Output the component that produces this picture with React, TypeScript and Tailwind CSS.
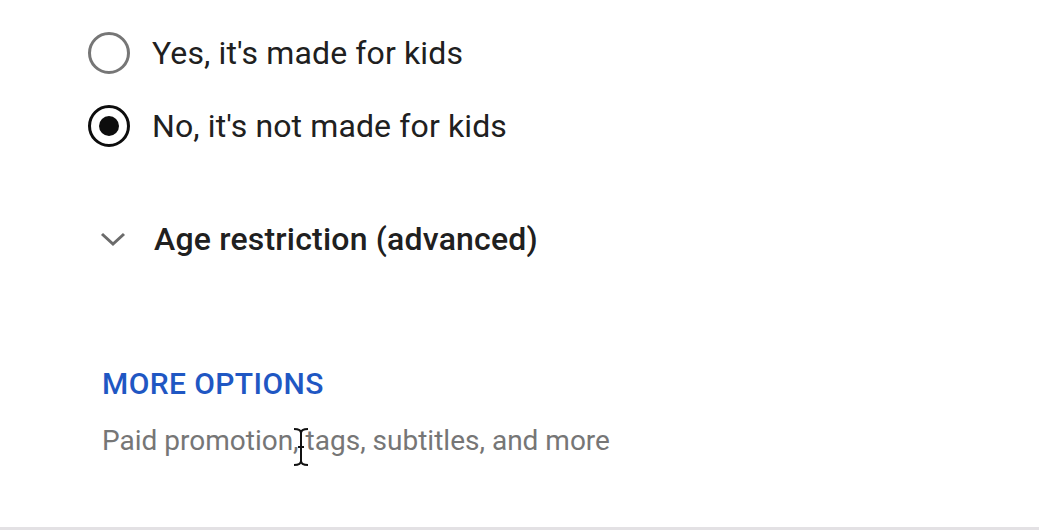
import React from "react";

const font = { fontFamily: "Roboto, 'Liberation Sans', sans-serif" };

function Radio({ checked }: { checked?: boolean }) {
  return (
    <span
      className={
        "flex h-[42px] w-[42px] shrink-0 items-center justify-center rounded-full border-[3px] " +
        (checked ? "border-[#0d0d0d]" : "border-[#767676]")
      }
    >
      {checked && <span className="h-[20px] w-[20px] rounded-full bg-[#0d0d0d]" />}
    </span>
  );
}

function TextCursor() {
  return (
    <svg className="absolute left-[292px] top-[427px]" width="18" height="40" viewBox="0 0 18 40" fill="none">
      <path d="M2 2c4 0 7 1 7 4v28c0 3-3 4-7 4M16 2c-4 0-7 1-7 4v28c0 3 3 4 7 4" stroke="#fff" strokeWidth="4" />
      <path d="M2 2c4 0 7 1 7 4v28c0 3-3 4-7 4M16 2c-4 0-7 1-7 4v28c0 3 3 4 7 4M6 20h6" stroke="#111" strokeWidth="2" />
    </svg>
  );
}

export default function App() {
  return (
    <div className="relative flex h-[530px] w-[1039px] flex-col bg-white" style={font}>
      <div className="flex flex-col pl-[88px] pt-[32px]">
        <label className="flex h-[42px] items-center gap-[22px]">
          <Radio />
          <span className="text-[32px] leading-none tracking-[0.13px] text-[#202020]">Yes, it's made for kids</span>
        </label>
        <label className="mt-[31px] flex h-[42px] items-center gap-[22px]">
          <Radio checked />
          <span className="text-[32px] leading-none tracking-[0.12px] text-[#202020]">No, it's not made for kids</span>
        </label>
      </div>

      <div className="mt-[72px] flex h-[40px] items-center gap-[28px] pl-[100px]">
        <svg width="26" height="16" viewBox="0 0 26 16" fill="none">
          <path d="M2 3l11 10L24 3" stroke="#6b6b6b" strokeWidth="3" />
        </svg>
        <span className="text-[32px] font-medium leading-none tracking-[0.2px] text-[#202020]">
          Age restriction (advanced)
        </span>
      </div>

      <div className="mt-[110px] flex flex-col pl-[102px]">
        <span className="h-[30px] text-[30px] font-medium leading-[30px] tracking-[0.4px] text-[#1f57c3]">
          MORE OPTIONS
        </span>
        <span className="mt-[28px] h-[28px] text-[28px] leading-[28px] text-[#767676]">
          Paid promotion, tags, subtitles, and more
        </span>
      </div>

      <div className="mt-auto h-[3px] w-full bg-[#e3e1e4]" />
      <TextCursor />
    </div>
  );
}
